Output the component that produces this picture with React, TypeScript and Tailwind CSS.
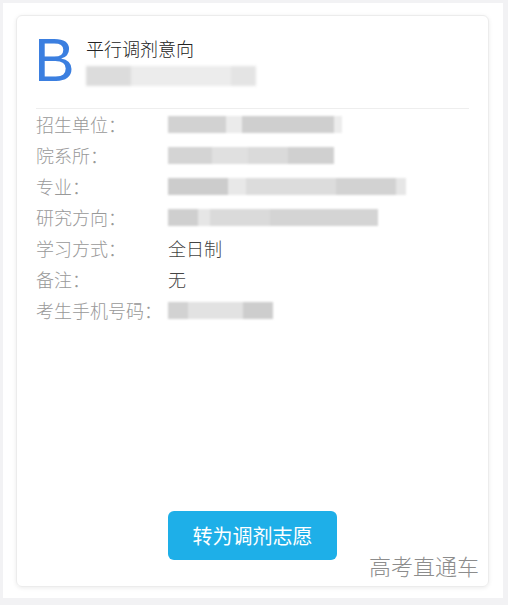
import React from "react";

const font = { fontFamily: '"Noto Sans CJK SC", "Liberation Sans", sans-serif' };

// blurred placeholder made of a few gray segments
const Blur = ({ segs }: { segs: [number, string][] }) => (
  <div className="flex h-[17px] items-stretch blur-[1px]">
    {segs.map(([w, c], i) => (
      <div key={i} className={c} style={{ width: w }} />
    ))}
  </div>
);

const rows: { label: string; value?: string; segs?: [number, string][] }[] = [
  {
    label: "招生单位：",
    segs: [
      [58, "bg-[#d2d2d2]"],
      [16, "bg-[#ebebeb]"],
      [92, "bg-[#cfcfcf]"],
      [8, "bg-[#ececec]"],
    ],
  },
  {
    label: "院系所：",
    segs: [
      [44, "bg-[#d4d4d4]"],
      [36, "bg-[#e0e0e0]"],
      [40, "bg-[#dadada]"],
      [46, "bg-[#d0d0d0]"],
    ],
  },
  {
    label: "专业：",
    segs: [
      [60, "bg-[#cccccc]"],
      [18, "bg-[#e8e8e8]"],
      [90, "bg-[#dcdcdc]"],
      [60, "bg-[#d2d2d2]"],
      [10, "bg-[#e6e6e6]"],
    ],
  },
  {
    label: "研究方向：",
    segs: [
      [30, "bg-[#cfcfcf]"],
      [12, "bg-[#e6e6e6]"],
      [60, "bg-[#dadada]"],
      [108, "bg-[#d4d4d4]"],
    ],
  },
  { label: "学习方式：", value: "全日制" },
  { label: "备注：", value: "无" },
  {
    label: "考生手机号码：",
    segs: [
      [20, "bg-[#d2d2d2]"],
      [55, "bg-[#e2e2e2]"],
      [30, "bg-[#cdcdcd]"],
    ],
  },
];

export default function App() {
  return (
    <div className="h-[605px] w-[508px] bg-[#f2f2f4] p-[3px]" style={font}>
      <div className="h-[595px] w-[500px] bg-white pl-[13px] pt-[12px]">
        <div className="relative flex h-[572px] w-[473px] flex-col rounded-md border border-[#ececec] px-[19px] pt-[14px] shadow-[0_1px_4px_rgba(0,0,0,0.08)]">
          <div className="flex h-[79px] border-b border-[#eeeeee]">
            <div
              className="-ml-[2px] w-[52px] text-[61px] leading-[60px] text-[#3b7fe0]"
              style={{ fontFamily: '"Liberation Sans", Arial, sans-serif' }}
            >
              B
            </div>
            <div className="pt-[6px]">
              <div className="text-[18px] font-light leading-[24px] text-[#222222]">平行调剂意向</div>
              <div className="mt-[6px] flex h-[20px] w-[170px] blur-[1.5px]">
                <div className="w-[45px] bg-[#dcdcdc]" />
                <div className="w-[100px] bg-[#ececec]" />
                <div className="w-[25px] bg-[#e4e4e4]" />
              </div>
            </div>
          </div>

          <div className="flex flex-col">
            {rows.map((r) => (
              <div key={r.label} className="flex h-[31px] items-center text-[18px] font-light">
                <div className="w-[132px] text-[#999999]">{r.label}</div>
                {r.value ? (
                  <div className="text-[#444444]">{r.value}</div>
                ) : (
                  <Blur segs={r.segs!} />
                )}
              </div>
            ))}
          </div>

          <div className="flex-1" />

          <div className="mb-[26px] pl-[132px]">
            <button className="h-[49px] w-[169px] rounded-md bg-[#1eafe8] text-[20px] font-normal text-white">
              转为调剂志愿
            </button>
          </div>

          <div className="absolute bottom-[6px] right-[9px] text-[22px] font-light leading-[30px] text-[#8c8c8c]">
            高考直通车
          </div>
        </div>
      </div>
    </div>
  );
}
